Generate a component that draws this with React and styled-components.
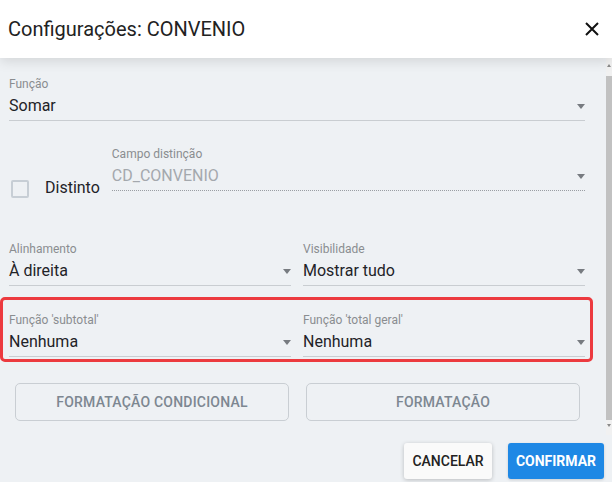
import styled, { createGlobalStyle } from "styled-components";

const Global = createGlobalStyle`
  html, body { margin: 0; padding: 0; }
  body {
    font-family: Roboto, "Liberation Sans", sans-serif;
    background: #eef1f4;
  }
`;

const Field = ({ label, value, muted, dotted }) => (
  <FieldBox>
    <Label>{label}</Label>
    <Select dotted={dotted ? 1 : 0}>
      <Value muted={muted ? 1 : 0}>{value}</Value>
      <Caret />
    </Select>
  </FieldBox>
);

const App = () => {
  return (
    <>
      <Global />
      <Dialog>
        <Header>
          <Title>Configurações: CONVENIO</Title>
          <Close aria-label="fechar">
            <svg width="14" height="14" viewBox="0 0 14 14">
              <path d="M1 1 L13 13 M13 1 L1 13" stroke="#111" strokeWidth="2" />
            </svg>
          </Close>
        </Header>
        <Body>
          <Content>
            <Field label="Função" value="Somar" />
            <DistinctRow>
              <Check />
              <CheckText>Distinto</CheckText>
              <Field label="Campo distinção" value="CD_CONVENIO" muted dotted />
            </DistinctRow>
            <Columns>
              <Field label="Alinhamento" value="À direita" />
              <Field label="Visibilidade" value="Mostrar tudo" />
            </Columns>
            <Highlight>
              <Field label="Função 'subtotal'" value="Nenhuma" />
              <Field label="Função 'total geral'" value="Nenhuma" />
            </Highlight>
            <ButtonRow>
              <OutlineButton>Formatação condicional</OutlineButton>
              <OutlineButton>Formatação</OutlineButton>
            </ButtonRow>
          </Content>
          <Scrollbar>
            <Arrow up />
            <Thumb />
            <Arrow />
          </Scrollbar>
        </Body>
        <Footer>
          <FlatButton>Cancelar</FlatButton>
          <PrimaryButton>Confirmar</PrimaryButton>
        </Footer>
      </Dialog>
    </>
  );
};

export default App;

const Dialog = styled.div`
  width: 612px;
  height: 482px;
  display: flex;
  flex-direction: column;
  overflow: hidden;
  background: #eef1f4;
`;

const Header = styled.div`
  height: 58px;
  flex-shrink: 0;
  background: #fff;
  display: flex;
  align-items: center;
  justify-content: space-between;
  padding: 0 13px 0 8px;
  box-shadow: 0 3px 12px rgba(0, 0, 0, 0.12);
  position: relative;
  z-index: 1;
`;

const Title = styled.h1`
  margin: 0;
  font-size: 20px;
  font-weight: 400;
  color: #222;
`;

const Close = styled.div`
  display: flex;
  width: 14px;
  height: 14px;
`;

const Body = styled.div`
  height: 377px;
  display: flex;
`;

const Content = styled.div`
  flex: 1;
  padding: 19px 21px 0 9px;
  display: flex;
  flex-direction: column;
`;

const FieldBox = styled.div`
  min-width: 0;
`;

const Label = styled.div`
  font-size: 12px;
  line-height: 14px;
  color: #8a8d90;
  margin-bottom: 5px;
`;

const Select = styled.div`
  display: flex;
  align-items: center;
  height: 20px;
  padding-bottom: 4px;
  border-bottom: 1px ${(p) => (p.dotted ? "dotted #9a9ea3" : "solid #c9cdd1")};
`;

const Value = styled.span`
  flex: 1;
  font-size: 16px;
  line-height: 20px;
  color: ${(p) => (p.muted ? "#a4a8ad" : "#1f2328")};
`;

const Caret = styled.span`
  width: 0;
  height: 0;
  border-left: 4.5px solid transparent;
  border-right: 4.5px solid transparent;
  border-top: 5px solid #777b80;
`;

const DistinctRow = styled.div`
  display: flex;
  align-items: flex-end;
  margin-top: 26px;

  > ${FieldBox} {
    flex: 1;
  }
`;

const Check = styled.span`
  width: 14px;
  height: 14px;
  border: 2px solid #c7ced5;
  border-radius: 2px;
  margin: 0 16px 0 2px;
  position: relative;
  top: 7px;
`;

const CheckText = styled.span`
  font-size: 16px;
  line-height: 20px;
  color: #1f2328;
  margin-right: 12px;
  position: relative;
  top: 7px;
`;

const Columns = styled.div`
  display: grid;
  grid-template-columns: 1fr 1fr;
  column-gap: 12px;
  margin-top: 51px;
`;

const Highlight = styled(Columns)`
  margin: 11px -8px 0 -9px;
  padding: 13px 5px 2px 6px;
  border: 3px solid #ec3a3f;
  border-radius: 5px;
`;

const ButtonRow = styled.div`
  display: flex;
  gap: 17px;
  margin: 21px 5px 0 6px;
`;

const OutlineButton = styled.button`
  flex: 1;
  height: 38px;
  background: transparent;
  border: 1px solid #c9ced3;
  border-radius: 5px;
  font-family: Roboto, "Liberation Sans", sans-serif;
  font-size: 14px;
  font-weight: 500;
  letter-spacing: 0.2px;
  text-transform: uppercase;
  color: #7d8791;
`;

const Scrollbar = styled.div`
  width: 6px;
  display: flex;
  flex-direction: column;
  align-items: center;
  background: #f1f1f1;
  padding: 6px 0 0;
`;

const Arrow = styled.span`
  width: 0;
  height: 0;
  border-left: 2.5px solid transparent;
  border-right: 2.5px solid transparent;
  ${(p) =>
    p.up
      ? "border-bottom: 3px solid #8a8a8a; margin-bottom: 9px;"
      : "border-top: 3px solid #8a8a8a; margin-top: 4px;"}
`;

const Thumb = styled.div`
  width: 6px;
  height: 344px;
  background: #c1c1c1;
`;

const Footer = styled.div`
  display: flex;
  justify-content: flex-end;
  gap: 16px;
  padding: 8px 8px 0 0;
`;

const FlatButton = styled.button`
  height: 36px;
  width: 88px;
  border: none;
  border-radius: 3px;
  background: #fafafa;
  box-shadow: 0 1px 4px rgba(0, 0, 0, 0.22);
  font-family: Roboto, "Liberation Sans", sans-serif;
  font-size: 14px;
  font-weight: 500;
  text-transform: uppercase;
  color: #222;
`;

const PrimaryButton = styled(FlatButton)`
  width: 96px;
  background: #1e88e5;
  color: #fff;
  font-weight: 700;
  box-shadow: 0 1px 3px rgba(0, 0, 0, 0.15);
`;
